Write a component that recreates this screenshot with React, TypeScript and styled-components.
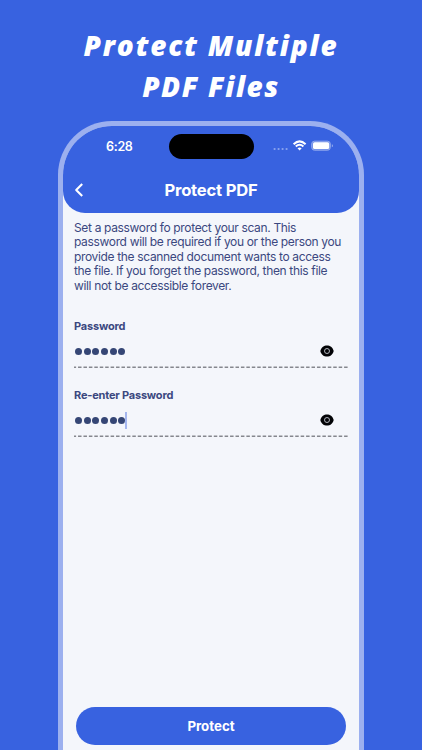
import React from "react";
import styled, { createGlobalStyle } from "styled-components";

const blue = "#3862e0";
const ink = "#3b4880";

const GlobalStyle = createGlobalStyle`
  * { box-sizing: border-box; }
  body { margin: 0; background: ${blue}; font-family: Inter, "Liberation Sans", sans-serif; }
`;

const Page = styled.main`
  width: 422px;
  height: 750px;
  overflow: hidden;
  display: flex;
  flex-direction: column;
  align-items: center;
  background: ${blue};
`;

const Headline = styled.h1`
  margin: 0;
  height: 121px;
  flex: none;
  padding-top: 25px;
  color: #fff;
  font: italic 800 28px/41px "Open Sans", sans-serif;
  text-align: center;
`;

const HeadlineLine = styled.span<{ $spacing: number }>`
  display: block;
  white-space: nowrap;
  letter-spacing: ${(p) => p.$spacing}px;
`;

const Phone = styled.section`
  width: 306px;
  flex: 1;
  display: flex;
  flex-direction: column;
  border: 5px solid #9cb0ef;
  border-bottom: 0;
  border-radius: 54px 54px 0 0;
  background: #f4f6fb;
  overflow: hidden;
`;

const Header = styled.header`
  height: 87px;
  flex: none;
  border-radius: 0 0 22px 22px;
  background: ${blue};
  color: #fff;
`;

const StatusBar = styled.div`
  height: 40px;
  display: grid;
  grid-template-columns: 106px 85px 1fr;
  align-items: center;
`;

const Clock = styled.time`
  padding: 1px 0 0 43px;
  font-size: 12.5px;
  font-weight: 600;
  line-height: 16px;
  letter-spacing: -0.3px;
`;

const Island = styled.div`
  height: 25px;
  border-radius: 13px;
  background: #000;
`;

const StatusIcons = styled.svg`
  margin-left: 18px;
  width: 62px;
  height: 14px;
`;

const NavBar = styled.nav`
  height: 47px;
  display: grid;
  grid-template-columns: 32px 1fr 32px;
  align-items: center;
`;

const BackButton = styled.button`
  display: flex;
  padding: 0 0 0 10px;
  border: 0;
  background: none;
  color: inherit;
`;

const Title = styled.h2`
  margin: 0;
  font-size: 16.6px;
  line-height: 20px;
  font-weight: 700;
  text-align: center;
  letter-spacing: -0.2px;
`;

const Content = styled.div`
  flex: 1;
  padding: 7.5px 11px 0;
  color: ${ink};
`;

const Description = styled.p`
  margin: 0 0 24.5px;
  font-size: 12px;
  line-height: 14.5px;
  letter-spacing: -0.34px;
  white-space: nowrap;
`;

const Field = styled.div`
  height: 69.2px;
`;

const Label = styled.label`
  display: block;
  height: 17px;
  font-size: 11px;
  font-weight: 700;
  line-height: 17px;
  letter-spacing: -0.2px;
`;

const InputRow = styled.div`
  height: 31px;
  display: flex;
  align-items: center;
  justify-content: space-between;
  padding: 2px 14px 0 1px;
`;

const Secret = styled.div`
  display: flex;
  align-items: center;
  gap: 1.65px;
`;

const Dot = styled.i`
  width: 7px;
  height: 7px;
  border-radius: 50%;
  background: #354675;
`;

const Caret = styled.i`
  width: 2px;
  height: 17px;
  margin-left: -1.4px;
  background: #a5b7ef;
`;

const Rule = styled.svg`
  display: block;
  width: 275px;
  height: 3px;
`;

const Submit = styled.button`
  width: 270px;
  height: 38px;
  flex: none;
  margin: 0 auto 5px;
  padding: 0;
  border: 0;
  border-radius: 19px;
  background: ${blue};
  color: #fff;
  font: 700 13.3px/18px Inter, sans-serif;
`;

const Eye = () => (
  <svg width="14" height="12" viewBox="0 0 14 12">
    <path d="M.3 6C1.4 2 4 .4 7 .4S12.6 2 13.7 6C12.6 10 10 11.6 7 11.6S1.4 10 .3 6Z" fill="#020306" />
    <circle cx="7" cy="6" r="2.5" fill="none" stroke="#c2c5cd" strokeWidth=".9" />
  </svg>
);

const PasswordField = ({ label, focused = false }: { label: string; focused?: boolean }) => (
  <Field>
    <Label>{label}</Label>
    <InputRow>
      <Secret>
        {Array.from({ length: 6 }, (_, i) => <Dot key={i} />)}
        {focused && <Caret />}
      </Secret>
      <Eye />
    </InputRow>
    <Rule viewBox="0 0 275 3">
      <path d="M0 1.3H274.5" stroke="#85878e" strokeWidth="1.6" strokeDasharray="3.5 1.93" strokeDashoffset="1.4" />
    </Rule>
  </Field>
);

export default function App() {
  return (
    <Page>
      <GlobalStyle />
      <Headline>
        <HeadlineLine $spacing={1.8}>Protect Multiple</HeadlineLine>
        <HeadlineLine $spacing={1.5}>PDF Files</HeadlineLine>
      </Headline>
      <Phone>
        <Header>
          <StatusBar>
            <Clock>6:28</Clock>
            <Island />
            <StatusIcons viewBox="0 0 62 14">
              <g fill="#8ba5ee">
                <circle cx="2.6" cy="10" r="1.1" />
                <circle cx="6.6" cy="10" r="1.1" />
                <circle cx="10.6" cy="10" r="1.1" />
                <circle cx="14.6" cy="10" r="1.1" />
              </g>
              <g fill="none" stroke="#fff" strokeWidth="2">
                <path d="M21.6 5.2Q27.6-.5 33.6 5.2" />
                <path d="M23.8 7.6Q27.6 4 31.4 7.6" />
              </g>
              <path d="M25.5 9.3Q27.6 7.5 29.7 9.3L27.6 11.5Z" fill="#fff" />
              <rect x="39.7" y="2.2" width="18.6" height="9" rx="2.8" fill="#6d8ce8" stroke="#91a9ee" />
              <rect x="41" y="3.3" width="16.2" height="6.8" rx="1.7" fill="#fff" />
              <path d="M59.8 5.2Q61 5.5 61 6.7T59.8 8.2Z" fill="#91a9ee" />
            </StatusIcons>
          </StatusBar>
          <NavBar>
            <BackButton aria-label="Back">
              <svg width="12" height="14" viewBox="0 0 12 14" fill="none" stroke="#fff" strokeWidth="2.1" strokeLinejoin="round">
                <path d="M9.2 1 3.2 7l6 6" />
              </svg>
            </BackButton>
            <Title>Protect PDF</Title>
          </NavBar>
        </Header>
        <Content>
          <Description>
            Set a password fo protect your scan. This<br />
            password will be required if you or the person you<br />
            provide the scanned document wants to access<br />
            the file. If you forget the password, then this file<br />
            will not be accessible forever.
          </Description>
          <PasswordField label="Password" />
          <PasswordField label="Re-enter Password" focused />
        </Content>
        <Submit>Protect</Submit>
      </Phone>
    </Page>
  );
}
